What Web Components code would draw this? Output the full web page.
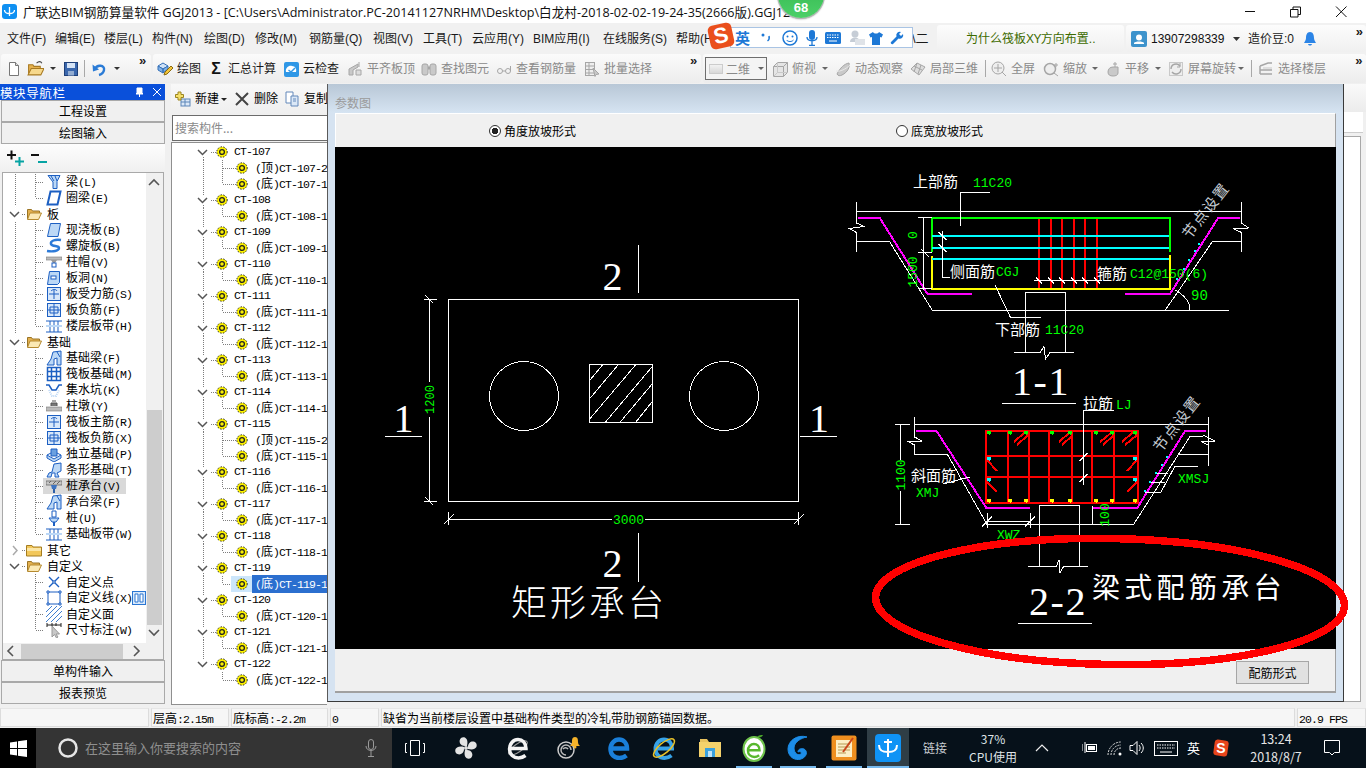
<!DOCTYPE html>
<html lang="zh">
<head>
<meta charset="utf-8">
<title>GGJ2013</title>
<style>
  html, body { margin: 0; height: 100%; overflow: hidden; background: #f0f0f0; }
  body { width: 1366px; height: 768px; position: relative; font: 12px "Liberation Sans", "Noto Sans CJK SC", sans-serif; }
  gl-app { width: 1366px; height: 768px; }
</style>
</head>
<body>
<gl-app>
  <gl-titlebar slot="title"></gl-titlebar>
  <gl-menubar slot="menu"></gl-menubar>
  <gl-toolbar slot="tools"></gl-toolbar>
  <gl-nav slot="nav"></gl-nav>
  <gl-comptree slot="mid"></gl-comptree>
  <gl-dialog slot="dialog"></gl-dialog>
  <gl-strip slot="strip"></gl-strip>
  <gl-status slot="status"></gl-status>
  <gl-taskbar slot="taskbar"></gl-taskbar>
</gl-app>
<gl-badge>68</gl-badge>
<gl-ime></gl-ime>

<script>
const CJK = '"Noto Sans CJK SC", sans-serif'
const ui = `"Liberation Sans", ${CJK}`

// wraps ascii runs so they get the narrow mono look of the tree font
const mono = s => s.replace(/[\x20-\x7e]+/g, m => `<span class="l">${m}</span>`)

const svg = (w, h, body, vb) =>
  `<svg width="${w}" height="${h}" viewBox="${vb || `0 0 ${w} ${h}`}" fill="none">${body}</svg>`

const B = '#1c5fc2', LB = '#bcd8f6', G1 = '#c9c9c9', G2 = '#a6a6a6'

const icons = {
  /* toolbar */
  page: `<path d="M3.5 1.5h6l3 3v10h-9z" fill="#fff" stroke="#777"/><path d="M9.5 1.5v3h3" fill="#ddd" stroke="#777"/>`,
  open: `<path d="M1.5 13V4.5h4l1 1.5h6v2" fill="#e6b24e" stroke="#a87a22"/><path d="M4 8h12l-3 6H1z" fill="#f6d88c" stroke="#a87a22"/><path d="M9 3c2-2 4-2 5 0" stroke="#444"/>`,
  save: `<rect x="1.5" y="1.5" width="13" height="13" fill="#3a67ad" stroke="#1e3f78"/><rect x="4" y="2" width="8" height="5" fill="#d5e3f5"/><rect x="5" y="10" width="6" height="4.5" fill="#93add2"/>`,
  undo: `<path d="M4 8C6 3 14 4 13 9c-.5 3-3 4.5-5 5" stroke="#2a7bd6" stroke-width="2.4"/><path d="M1.5 3.5l.5 7 6-2z" fill="#2a7bd6"/>`,
  draw: `<path d="M1 5l5-3 5 3-5 3z" fill="#cfe2f7" stroke="#3570b8"/><path d="M1 5v4l5 3V8zM11 5v3L6 12V8z" fill="#7fb0e6" stroke="#3570b8"/><path d="M7 14l1-3 6-6 2 2-6 6z" fill="#f3c63c" stroke="#8a6a10"/>`,
  cloud: `<rect x="1" y="1" width="15" height="15" rx="2" fill="#2f97e6"/><path d="M3 11c-1-4 3-7 6-6 3 0 5 3 4 6z" fill="#fff"/><path d="M5.5 9l2.5 2 4-4" stroke="#2f97e6" stroke-width="1.5"/>`,
  align: `<path d="M2 8l9-5v3l-5 3v5H2z" fill="${G1}" stroke="${G2}"/><path d="M9 9h5v5H9z" fill="#ddd" stroke="${G2}"/><path d="M12 1v5" stroke="${G2}"/>`,
  find: `<rect x="1" y="3" width="6" height="11" rx="2" fill="${G1}" stroke="${G2}"/><rect x="9" y="3" width="6" height="11" rx="2" fill="${G1}" stroke="${G2}"/><path d="M7 7h2" stroke="${G2}" stroke-width="3"/>`,
  glass: `<circle cx="4" cy="10" r="2.5" stroke="${G2}"/><circle cx="12" cy="10" r="2.5" stroke="${G2}"/><path d="M6.5 10h3M14.5 10V5" stroke="${G2}"/>`,
  batch: `<rect x="1.5" y="1.5" width="9" height="13" fill="#eee" stroke="${G2}"/><path d="M1.5 5h9M1.5 8.5h9M1.5 12h9M5 1.5v13" stroke="${G2}"/><path d="M9 7l6 6-3 .5-1 2z" fill="${G1}" stroke="${G2}"/>`,
  persp: `<path d="M1.5 5.5h10v10h-10zM1.5 5.5l4-4h10v10l-4 4M11.5 5.5l4-4" fill="#e5e5e5" stroke="${G2}"/><path d="M5.5 1.5v10h10M5.5 11.5l-4 4" stroke="${G1}"/>`,
  orbit: `<path d="M2 13C5 7 9 3 14 2c1 4-1 9-7 12-2 1-4 1-5-1z" fill="${G1}" stroke="${G2}"/><path d="M1 10c4 1 10-2 14-6" stroke="#e8e8e8"/>`,
  local: `<path d="M1 8l6-6 8 4-6 8z" fill="#ddd" stroke="${G2}"/><path d="M4 5l8 4M7 2l-3 9M11 4l-3 9" stroke="${G2}"/>`,
  full: `<circle cx="7" cy="7" r="6" fill="#eee" stroke="${G2}"/><path d="M7 3v8M3 7h8M11 11l4 4" stroke="${G2}"/>`,
  zoom: `<circle cx="7" cy="8" r="5.5" fill="#eee" stroke="${G2}" stroke-width="1.5"/><path d="M11 12l4 3M13 2v4M11 4h4" stroke="${G2}"/>`,
  pan: `<path d="M3 11c0-3 2-5 5-5l5 0v6c0 2-2 3-5 3s-5-1-5-4z" fill="${G1}" stroke="${G2}"/><path d="M10 1v5M8 3h4" stroke="${G2}"/>`,
  rotate: `<rect x="1.5" y="1.5" width="13" height="13" fill="#eee" stroke="${G1}"/><path d="M3 8a5 5 0 0 1 9-3M13 8a5 5 0 0 1-9 3" stroke="${G2}" stroke-width="1.4"/><path d="M12 2v4H9" stroke="${G2}"/>`,
  floors: `<path d="M2 5l8-3h4M2 9h12M2 13h12M2 5v8" stroke="${G2}" stroke-width="1.5"/><path d="M5 7h9" stroke="${G1}"/>`,
  /* nav tree */
  beam: `<path d="M2 1.5h12l-3 6v7H7V8z" fill="${LB}" stroke="${B}"/><path d="M5 2l3 5M9 2l2 5" stroke="${B}"/>`,
  ring: `<path d="M4.5 1.5h10l-3 13h-10z" fill="#fff" stroke="${B}" stroke-width="2"/>`,
  slab: `<path d="M4.5 1.5h10l-2.5 13H1.5z" fill="${LB}" stroke="${B}"/>`,
  spiral: `<path d="M15 2C9 1 4 3 5 6c1 3 8 1 8 4s-6 4-12 3" stroke="#2c7ad8" stroke-width="2.4"/>`,
  cap: `<rect x="0" y="3" width="16" height="3" fill="#bbb" stroke="#777" stroke-width=".6"/><path d="M5 6h6l-2 3H7z" fill="#999"/><rect x="6" y="9" width="4" height="4" fill="#fff" stroke="${B}"/>`,
  hole: `<path d="M3.5 1.5h10v11l-2 2h-10z" fill="${LB}" stroke="${B}"/><rect x="5" y="6" width="5" height="3" fill="#fff" stroke="${B}"/>`,
  grid1: `<rect x="1.5" y="1.5" width="13" height="13" fill="#d8e8fa" stroke="${B}"/><path d="M8 3v10M3 8h10M5 5c2-2 5-2 6 0" stroke="${B}"/>`,
  grid2: `<rect x="1.5" y="1.5" width="13" height="13" fill="#d8e8fa" stroke="${B}"/><path d="M2 8h12M8 2v12M4 5h8v6H4z" stroke="${B}"/>`,
  band: `<path d="M0 3h16M0 14h16M4 3v11M8 3v11M12 3v11" stroke="${B}"/><path d="M0 8h16" stroke="${LB}" stroke-width="2"/>`,
  fbeam: `<path d="M1 15l4-6 2-7 8-1v14h-4V8L8 9v6z" fill="${LB}" stroke="${B}"/><path d="M11 2l3 5" stroke="${B}"/>`,
  mat: `<rect x="1.5" y="1.5" width="13" height="13" fill="#fff" stroke="${B}" stroke-width="1.5"/><path d="M5.5 2v12M10.5 2v12M2 5.5h12M2 10.5h12" stroke="${B}" stroke-width="1.5"/>`,
  pit: `<path d="M0 3h3l3 5h4l3-5h3" stroke="${B}" stroke-width="1.5"/><path d="M3 8l3 6h4l3-6" stroke="${LB}" stroke-width="2" stroke-dasharray="1 1"/>`,
  pier: `<path d="M5 8V5h6v3" fill="#777" stroke="#555"/><path d="M6 2h4v3H6z" fill="#aaa"/><rect x="0" y="9" width="16" height="4" fill="#bbb" stroke="#777" stroke-width=".6"/>`,
  iso: `<path d="M1 9l7 4 7-4v3l-7 4-7-4z" fill="${LB}" stroke="${B}"/><path d="M5 3h6v7H5z" fill="#6aa0e0" stroke="${B}"/><path d="M1 9l4-2M15 9l-4-2" stroke="${B}"/>`,
  strip: `<path d="M1 15l2-4 3-1 2-8 7-1v8l-4 2 2 4h-4V11H6l-1 4z" fill="${LB}" stroke="${B}"/>`,
  capp: `<rect x="0" y="3" width="16" height="4" fill="#c6c6c6" stroke="#666" stroke-width=".8"/><path d="M3 5l2-2M7 6l3-3M11 6l3-3" stroke="#666"/><path d="M5 7h6l-1 4H6z" fill="#3d73c0"/><path d="M7 11h2v4H7z" fill="#2c5fa8"/>`,
  pile: `<path d="M6 1h4v6h-4z" fill="#fff" stroke="${B}"/><path d="M3 8h10l-3 4H6z" fill="${LB}" stroke="${B}"/><path d="M8 12v4" stroke="${B}" stroke-width="2"/>`,
  pt: `<path d="M3 3l10 10M13 3L3 13" stroke="${B}" stroke-width="1.4"/><circle cx="8" cy="8" r="1.2" fill="#fff" stroke="${B}"/>`,
  line: `<rect x="2" y="2" width="12" height="12" stroke="${B}"/><path d="M1 1h2v2H1zM13 1h2v2h-2zM1 13h2v2H1zM13 13h2v2h-2z" fill="#fff" stroke="${B}"/>`,
  face: `<path d="M0 6l6-6M0 11L11 0M0 16L16 0M5 16L16 5M10 16l6-6" stroke="#3f7fd0"/>`,
  dim: `<path d="M1 3h14M1 1v4M15 1v4" stroke="#222"/><path d="M6 1v3M10 1v3" stroke="#222"/><path d="M6 4l0 11 2.5-2.5 2 3.5 1.5-1-2-3h3.5z" fill="#c8c8c8" stroke="#999"/>`,
  fopen: `<path d="M1.5 13V3.5h4l1 1.5h7v2" fill="#e3b04f" stroke="#9a7424"/><path d="M4 7h11.5l-3 6.5h-11z" fill="#fbe9b4" stroke="#b58a30"/>`,
  fclosed: `<path d="M.5 3.5h5.5l1 1.5h8.5v9H.5z" fill="#f2c75a" stroke="#a57d20"/><path d="M1 6h14v3H1z" fill="#fbe6a6"/>`
}
const ico = (n, s) => svg(s || 16, s || 16, icons[n], '0 0 16 16')

const gear = s => svg(s, s, `<circle cx="6" cy="6" r="5.2" fill="#fbf000" stroke="#222" stroke-dasharray="1.4 1.4"/><circle cx="6" cy="6" r="2.4" fill="#fbf000" stroke="#222" stroke-width="1.3"/>`, '0 0 12 12')

class Shadow extends HTMLElement {
  constructor() {
    super()
    this.attachShadow({ mode: 'open' }).innerHTML = this.markup()
  }
}

class App extends Shadow {
  markup() { return `
    <style>
      :host { display: flex; flex-direction: column; color: #000; }
      .work { display: grid; grid-template-columns: 165px 162px 1017px 22px; height: 624px; margin-top: 1px; overflow: hidden; }
    </style>
    <slot name="title"></slot>
    <slot name="menu"></slot>
    <slot name="tools"></slot>
    <div class="work">
      <slot name="nav"></slot>
      <slot name="mid"></slot>
      <slot name="dialog"></slot>
      <slot name="strip"></slot>
    </div>
    <slot name="status"></slot>
    <slot name="taskbar"></slot>` }
}

class TitleBar extends Shadow {
  markup() { return `
    <style>
      :host { display: flex; align-items: center; height: 23px; background: #fff; padding-left: 2px; font: 12.6px "Open Sans", ${CJK}; color: #111; overflow: hidden; }
      .logo { width: 15px; height: 15px; background: #0f90f2; border-radius: 3px; display: flex; align-items: center; justify-content: center; margin-right: 6px; flex: none; }
      .txt { width: 778px; white-space: nowrap; overflow: hidden; flex: none; }
      .ctl { margin-left: auto; display: flex; align-items: center; }
      .ctl svg { display: block; }
    </style>
    <span class="logo">${svg(13, 13, '<path d="M6.5 2v9M1.5 5c0 3 2 3.5 5 3.5s5-.5 5-3.5" stroke="#fff" stroke-width="1.3"/>')}</span>
    <span class="txt">广联达BIM钢筋算量软件 GGJ2013 - [C:\\Users\\Administrator.PC-20141127NRHM\\Desktop\\白龙村-2018-02-02-19-24-35(2666版).GGJ12</span>
    <span class="ctl">
      ${svg(46, 22, '<path d="M17 10.5h10" stroke="#111"/>')}
      ${svg(46, 22, '<path d="M16.5 8.5h7.5v7.5h-7.5zM19 8.5V6h7.5v7.5H24" stroke="#111"/>')}
      ${svg(46, 22, '<path d="M16 5.5l10.5 10.5M26.5 5.5L16 16" stroke="#111"/>')}
    </span>` }
}

class MenuBar extends Shadow {
  markup() {
    const items = [['文件(F)', 48], ['编辑(E)', 49], ['楼层(L)', 48], ['构件(N)', 52], ['绘图(D)', 51], ['修改(M)', 54], ['钢筋量(Q)', 64], ['视图(V)', 50], ['工具(T)', 49], ['云应用(Y)', 61], ['BIM应用(I)', 70], ['在线服务(S)', 73], ['帮助(H)', 40]]
    return `
    <style>
      :host { display: flex; align-items: center; height: 31px; background: #f1f1f1; font: 12px/16px ${ui}; color: #1a1a1a; }
      .left { display: flex; padding-left: 7px; width: 709px; box-sizing: border-box; white-space: nowrap; flex: none; }
      .left span { flex: none; }
      .rest { width: 25px; margin-left: 203px; flex: none; font-size: 13px; white-space: nowrap; }
      .tab { display: flex; align-items: center; height: 27px; background: linear-gradient(#fcfcfc, #f0f0f0); border-radius: 3px; flex: none; }
      .q { width: 187px; padding-left: 29px; box-sizing: border-box; color: #3d6b00; white-space: nowrap; }
      .q .xy { font-family: "Liberation Sans Narrow", "Liberation Sans"; letter-spacing: -.6px; }
      .me { margin-left: 2px; width: 240px; padding-left: 5px; box-sizing: border-box; }
      .num { margin-left: 4px; width: 75px; color: #111; }
      .car { margin: 0 8px 0 7px; }
      .bell { margin-left: 9px; }
      .mm { margin: 0 4px 0 auto; font: bold 13px/12px "Liberation Sans"; letter-spacing: -1px; align-self: flex-start; padding-top: 1px; }
      svg { display: block; }
    </style>
    <div class="left">${items.map(i => `<span style="width:${i[1]}px">${i[0]}</span>`).join('')}</div>
    <span class="rest">\\二</span>
    <div class="tab q">为什么筏板<span class="xy">XY</span>方向布置..</div>
    <div class="tab me">
      ${svg(16, 16, '<rect width="16" height="16" rx="2" fill="#3d93cc"/><circle cx="8" cy="6.5" r="3" fill="#fff"/><path d="M3 13h10v-1c-1-2-9-2-10 0z" fill="#fff"/>')}
      <span class="num">13907298339</span>
      <span class="car">${svg(7, 4, '<path d="M0 0h7L3.5 4z" fill="#333"/>')}</span>
      <span>造价豆:0</span>
      <span class="bell">${svg(14, 16, '<path d="M7 1c-3 0-4 3-4 6 0 2-1 3-2 5h12c-1-2-2-3-2-5 0-3-1-6-4-6z" fill="#2b84e6"/><path d="M5 13c.5 2 3.5 2 4 0z" fill="#2b84e6"/>')}</span>
      <span class="mm">»</span>
    </div>` }
}

class Tool extends Shadow {
  markup() {
    const off = this.hasAttribute('off')
    const cg = this.getAttribute('caret')
    return `
    <style>
      :host { display: inline-flex; align-items: center; flex: none; height: 24px; font: 12px/16px ${ui}; color: ${off ? '#8a8a8a' : '#1a1a1a'}; }
      svg { display: block; flex: none; }
      .t { margin-left: 4px; white-space: nowrap; }
      .sym { width: 16px; text-align: center; font: bold 16px "Liberation Sans"; color: #111; }
    </style>
    ${this.getAttribute('icon') === 'sigma' ? '<span class="sym">Σ</span>' : ico(this.getAttribute('icon'))}
    <span class="t"><slot></slot></span>
    ${cg !== null ? `<span style="margin-left:${cg}px">${svg(6, 3, `<path d="M0 0h6L3 3z" fill="${off ? '#666' : '#333'}"/>`)}</span>` : ''}` }
}

class ToolBar extends Shadow {
  markup() {
    const more = w => `<span style="font:bold 13px/12px 'Liberation Sans';letter-spacing:-1px;align-self:flex-start;margin:1px 0 0 ${w}px;color:#222;flex:none">»</span>`
    const sep = m => `<i style="width:1px;height:17px;background:#a8a8a8;margin-left:${m}px;flex:none"></i>`
    const caret = m => `<span style="margin-left:${m}px">${svg(6, 3, '<path d="M0 0h6L3 3z" fill="#333"/>')}</span>`
    return `
    <style>
      :host { display: flex; height: 29px; padding-left: 1px; gap: 2px; background: #f0f0f0; }
      .seg { display: flex; align-items: center; height: 29px; background: linear-gradient(#fbfbfb, #ececec); border-radius: 3px; flex: none; box-sizing: border-box; }
      .combo { display: flex; align-items: center; flex: none; width: 62px; height: 23px; margin-left: 1px; border: 1px solid #6e6e6e; box-sizing: border-box; font: 12px ${ui}; color: #8a8a8a; padding-left: 3px; background: #f4f4f4; white-space: nowrap; }
      .combo b { width: 14px; height: 10px; background: linear-gradient(#f2f2f2, #d8d8d8); border: 1px solid #ccc; margin-right: 3px; box-sizing: border-box; }
      .combo i { margin-left: 8px; }
      svg { display: block; }
    </style>
    <div class="seg" style="width:150px;padding-left:5px">
      ${ico('page')}
      <span style="margin-left:5px">${ico('open', 17)}</span>${caret(6)}
      <span style="margin-left:7px">${ico('save')}</span>
      ${sep(5)}
      <span style="margin-left:6px">${ico('undo')}</span>${caret(7)}
      ${more(19)}
    </div>
    <div class="seg" style="width:548px;padding-left:4px">
      <gl-tool icon="draw">绘图</gl-tool>
      <gl-tool icon="sigma" style="margin-left:7px">汇总计算</gl-tool>
      <gl-tool icon="cloud" style="margin-left:7px">云检查</gl-tool>
      <gl-tool icon="align" off style="margin-left:8px">平齐板顶</gl-tool>
      <gl-tool icon="find" off style="margin-left:6px">查找图元</gl-tool>
      <gl-tool icon="glass" off style="margin-left:7px">查看钢筋量</gl-tool>
      <gl-tool icon="batch" off style="margin-left:8px">批量选择</gl-tool>
      ${more(38)}
    </div>
    <div class="seg" style="width:663px;padding-left:1px">
      <div class="combo"><b></b>二维<i>${svg(6, 3, '<path d="M0 0h6L3 3z" fill="#666"/>')}</i></div>
      <gl-tool icon="persp" off caret="6" style="margin-left:5px">俯视</gl-tool>
      <gl-tool icon="orbit" off style="margin-left:7px">动态观察</gl-tool>
      <gl-tool icon="local" off style="margin-left:7px">局部三维</gl-tool>
      ${sep(7)}
      <gl-tool icon="full" off style="margin-left:5px">全屏</gl-tool>
      <gl-tool icon="zoom" off caret="5" style="margin-left:8px">缩放</gl-tool>
      <gl-tool icon="pan" off caret="6" style="margin-left:7px">平移</gl-tool>
      <gl-tool icon="rotate" off caret="2" style="margin-left:7px">屏幕旋转</gl-tool>
      ${sep(7)}
      <gl-tool icon="floors" off style="margin-left:6px">选择楼层</gl-tool>
      ${more(29)}
    </div>` }
}

const treeFont = `
  .row { display: flex; align-items: center; height: 16px; white-space: nowrap; font: 12px/16px ${CJK}; color: #000; }
  .l { font: 11.5px/16px "Liberation Mono", monospace; letter-spacing: -.9px; }
  svg { display: block; flex: none; }
  .dot { stroke: #7d7d7d; stroke-dasharray: 1 1; shape-rendering: crispEdges; }
`

class Nav extends Shadow {
  markup() {
    const R = [
      ['beam', '梁(L)', 1], ['ring', '圈梁(E)', 1, 1],
      [0, '板', 'o'],
      ['slab', '现浇板(B)', 1], ['spiral', '螺旋板(B)', 1], ['cap', '柱帽(V)', 1], ['hole', '板洞(N)', 1], ['grid1', '板受力筋(S)', 1], ['grid2', '板负筋(F)', 1], ['band', '楼层板带(H)', 1, 1],
      [0, '基础', 'o'],
      ['fbeam', '基础梁(F)', 1], ['mat', '筏板基础(M)', 1], ['pit', '集水坑(K)', 1], ['pier', '柱墩(Y)', 1], ['grid1', '筏板主筋(R)', 1], ['grid2', '筏板负筋(X)', 1], ['iso', '独立基础(P)', 1], ['strip', '条形基础(T)', 1], ['capp', '桩承台(V)', 1, 0, 'hl'], ['fbeam', '承台梁(F)', 1], ['pile', '桩(U)', 1], ['band', '基础板带(W)', 1, 1],
      [0, '其它', 'c'],
      [0, '自定义', 'o'],
      ['pt', '自定义点', 0], ['line', '自定义线(X)', 0, 0, 'pop'], ['face', '自定义面', 0], ['dim', '尺寸标注(W)', 0, 1]
    ]
    const rows = R.map(r => {
      if (!r[0]) {
        const ch = r[2] === 'o'
          ? '<path d="M10 6l4.5 4.5L19 6" stroke="#555" stroke-width="1.5"/>'
          : '<path d="M13 4l4 4.5-4 4.5" stroke="#aaa" stroke-width="1.5"/>'
        return `<div class="row">${svg(23, 16, `${ch}<path class="dot" d="M22 8.5h4"/>`, '3 0 23 16')}
          ${ico(r[2] === 'o' ? 'fopen' : 'fclosed')}<span style="margin-left:5px">${r[1]}</span></div>`
      }
      const g = `${r[2] ? '<path class="dot" d="M15.5 0v16"/>' : ''}<path class="dot" d="M35.5 0v${r[3] ? 8 : 16}M35.5 8.5h8"/>`
      const pop = r[4] === 'pop' ? svg(14, 16, '<rect x=".5" y="1.5" width="13" height="13" fill="#d8e8fa" stroke="#2a76d2"/><path d="M3 4h3v8H3zM8 4h3v8H8z" fill="#fff" stroke="#2a76d2"/>') : ''
      return `<div class="row">${svg(40, 16, g, '3 0 40 16')}
        <span class="cell ${r[4] || ''}">${ico(r[0])}<span>${mono(r[1])}</span></span>${pop}</div>`
    }).join('')
    const arrow = d => svg(16, 16, `<path d="${d}" stroke="#555" stroke-width="1.6"/>`)
    return `
    <style>
      :host { display: flex; flex-direction: column; width: 165px; height: 621px; box-sizing: border-box; }
      ${treeFont}
      .head { display: flex; align-items: center; height: 16px; background: #0a50da; color: #fff; font: 12.5px/15px ${CJK}; letter-spacing: .6px; flex: none; }
      .head span { flex: 1; }
      .head svg { margin-right: 5px; }
      .head svg + svg { margin-right: 1px; }
      .btn { height: 22px; margin-left: 1px; text-align: center; background: #f0f0f0; border: 1px solid #a9a9a9; font: 12px/20px ${CJK}; box-sizing: border-box; flex: none; width: 164px; }
      .plus { display: flex; align-items: center; gap: 6px; height: 28px; padding-left: 6px; background: linear-gradient(#fdfdfd, #f0f0f0); flex: none; }
      .frame { display: grid; grid-template-columns: 143px 16px; grid-template-rows: 470px 16px; margin-left: 2px; width: 162px; height: 488px; flex: none; box-sizing: border-box; border: 1px solid #a9a9a9; background: #f0f0f0; }
      .tree { background: #fff; overflow: hidden; padding-top: 1px; box-sizing: border-box; }
      .cell { display: flex; align-items: center; gap: 4px; padding: 0 6px 0 3px; height: 16px; flex: none; }
      .cell.hl { background: #d9d9d9; }
      .cell.pop { padding-right: 0; }
      .vs { display: flex; flex-direction: column; align-items: center; }
      .vs b { width: 15px; height: 215px; background: #cdcdcd; flex: none; margin-top: 220px; }
      .vs .up { margin-top: 1px; height: 16px; flex: none; }
      .hs { display: flex; align-items: center; grid-column: 1 / 3; }
      .hs b { width: 102px; height: 15px; background: #cdcdcd; margin: 0 5px 0 2px; }
    </style>
    <div class="head"><span>模块导航栏</span>
      ${svg(12, 12, '<path d="M4 2h5v5l1 1H3l1-1zM6.5 8v3" stroke="#fff" fill="#fff"/>')}
      ${svg(14, 12, '<path d="M3 2l8 8M11 2l-8 8" stroke="#fff"/>')}
    </div>
    <div class="btn">工程设置</div>
    <div class="btn">绘图输入</div>
    <div class="plus">
      ${svg(18, 18, '<path d="M1 6h9M5.5 1.5v9" stroke="#111" stroke-width="2"/><path d="M9 12.5h9M13.5 8v9" stroke="#06a3a3" stroke-width="2"/>')}
      ${svg(18, 18, '<path d="M1 6h8" stroke="#111" stroke-width="2"/><path d="M8 13h9" stroke="#06a3a3" stroke-width="2"/>')}
    </div>
    <div class="frame">
      <div class="tree">${rows}</div>
      <div class="vs">
        <span class="up">${arrow('M3 11l5-5 5 5')}</span>
        <b></b>
        ${arrow('M3 5l5 5 5-5')}
      </div>
      <div class="hs">${arrow('M10 3L5 8l5 5')}<b></b>${arrow('M6 3l5 5-5 5')}</div>
    </div>
    <div class="btn">单构件输入</div>
    <div class="btn">报表预览</div>` }
}

class CompTree extends Shadow {
  markup() {
    const groups = [[107, ['顶', 2], ['底', 1]]]
    for (let n = 108; n <= 122; n++) groups.push(n === 115 ? [n, ['顶', 2], ['底', 1]] : [n, ['底', 1]])
    const rows = groups.map((g, gi) => {
      const more = gi < groups.length - 1
      const [num, ...kids] = g
      const top = `<div class="row">${svg(44, 16, `<path d="M198 6l4.5 4.5L207 6" stroke="#555" stroke-width="1.5"/><path class="dot" d="M211 8.5h5"/>${gi ? '<path class="dot" d="M203.5 0v3"/>' : ''}${more ? '<path class="dot" d="M203.5 13v3"/>' : ''}`, '172 0 44 16')}
        ${gear(12)}<span class="l" style="margin-left:6px">CT-${num}</span></div>`
      return top + kids.map((k, i) => {
        const last = i === kids.length - 1
        const sel = num === 119
        return `<div class="row">${svg(59, 16, `${more ? '<path class="dot" d="M203.5 0v16"/>' : ''}<path class="dot" d="M222.5 0v${last ? 8 : 16}M222.5 8.5h9"/>`, '172 0 59 16')}
          <span class="ic ${sel ? 'sel' : ''}">${sel ? '' : svg(5, 16, '<path class="dot" d="M0 8.5h5"/>')}<span style="margin-left:${sel ? 5 : 0}px">${gear(12)}</span></span>
          <span class="tx ${sel ? 'sel' : ''}">${mono(`(${k[0]})CT-${num}-${k[1]}`)}</span></div>`
      }).join('')
    }).join('')
    return `
    <style>
      :host { display: flex; flex-direction: column; width: 162px; height: 621px; overflow: hidden; box-sizing: border-box; padding-left: 6px; }
      ${treeFont}
      .bar { display: flex; align-items: center; height: 30px; flex: none; background: linear-gradient(#f8f8f8, #efefef); font: 12px/16px ${ui}; white-space: nowrap; padding-left: 4px; }
      .bar svg { margin-right: 4px; }
      .search { height: 26px; flex: none; margin: 1px -2px 0 1px; box-sizing: border-box; border: 1px solid #6b6b6b; background: #fff; color: #8a8a8a; font: 12px/24px ${CJK}; padding-left: 2px; }
      .tree { flex: 1; background: #fff; border: 1px solid #8f8f8f; border-right: 0; margin-top: 1px; padding-top: 1px; overflow: hidden; box-sizing: border-box; }
      .ic { display: flex; align-items: center; width: 21px; height: 16px; flex: none; }
      .ic.sel { background: #cce6fb; }
      .tx { display: block; padding-left: 3px; flex: 1; min-width: 80px; }
      .tx.sel { background: #2b6fcf; color: #fff; }
    </style>
    <div class="bar">
      ${svg(16, 16, '<rect x="6" y="8" width="9" height="7" fill="#dbe8f7" stroke="#5d86b8"/><path d="M6 11h9M10 8v7" stroke="#5d86b8"/><path d="M3 1h3v2.5h2.5v3H6V9H3V6.5H.5v-3H3z" fill="#f5e06a" stroke="#9b8420"/>')}
      <span>新建</span><span style="margin:0 8px 0 2px">${svg(6, 3, '<path d="M0 0h6L3 3z" fill="#222"/>').replace('<svg', '<svg style="margin:0"')}</span>
      ${svg(14, 14, '<path d="M1 1l12 12M13 1L1 13" stroke="#444" stroke-width="2"/>')}
      <span style="margin:0 6px 0 1px">删除</span>
      ${svg(16, 16, '<path d="M2 1h7v11H2z" fill="#fff" stroke="#6288ba"/><path d="M7 5h7v10H7z" fill="#dbe8f7" stroke="#6288ba"/><path d="M9 8h3M9 10h3" stroke="#6288ba"/>')}
      <span>复制</span>
    </div>
    <div class="search">搜索构件...</div>
    <div class="tree">${rows}</div>` }
}

class Drawing extends Shadow {
  markup() {
    const w = (x1, y1, x2, y2) => `M${x1} ${y1}L${x2} ${y2}`
    const slash = (x, y, s = 5) => `M${x - s} ${y + s}L${x + s} ${y - s}`
    const bslash = (x, y, s = 4) => `M${x - s} ${y - s}L${x + s} ${y + s}`
    const xs = [987, 1008, 1024, 1050, 1068, 1094, 1110, 1133]
    const dots = (arr, y, c) => arr.map(x => `<rect x="${x}" y="${y - 2}" width="4" height="4" rx="1.5" fill="${c}"/>`).join('')
    return `
    <style>
      :host { display: block; width: 1001px; height: 502px; background: #000; overflow: hidden; }
      svg { display: block; }
      path, rect, circle { shape-rendering: crispEdges; }
      .n { stroke: #fff; fill: none; }
      text { font-family: ${CJK}; }
      .w { fill: #fff; font-size: 15px; }
      .g { fill: #0f0; font: 13px "Liberation Mono", monospace; }
      .s { fill: #fff; font: 40px "Liberation Serif", serif; text-anchor: middle; }
      .t { fill: #fff; font-size: 36px; font-weight: 300; letter-spacing: 3px; }
      .b { fill: #fff; font-size: 28px; font-weight: 400; letter-spacing: 4.3px; }
      .r { fill: #c5ccd3; font-size: 15px; letter-spacing: 1.5px; text-anchor: middle; }
    </style>
    <svg width="1001" height="502" viewBox="335 147 1001 502">
      <!-- plan -->
      <path class="n" d="M448.5 299.5h350v202h-350z"/>
      <circle class="n" cx="524" cy="396" r="34.5"/>
      <circle class="n" cx="724" cy="396" r="34.5"/>
      <path class="n" d="M589.5 364.5h63v58h-63z"/>
      <path class="n" d="M590 380L602.7 364.7M590 398.3L618.3 364.7M590 418.7L635.7 364.7M605.3 422.3L652.7 366M620 422.3L652.7 383.3M635.7 422.3L652.7 401"/>
      <path class="n" d="M429.5 299.5V382M429.5 417V501.5M424 299.5h13M424 501.5h13${bslash(429.5, 299.5)}${bslash(429.5, 501.5)}"/>
      <text class="g" style="font-size:12px" text-anchor="middle" transform="translate(434,399.5) rotate(-90)">1200</text>
      <path class="n" d="M448.5 519.5H612M645 519.5H798.5M448.5 512V525M798.5 512V525${slash(448.5, 519.5)}${slash(798.5, 519.5)}"/>
      <text class="g" x="628.5" y="523.5" text-anchor="middle">3000</text>
      <path class="n" d="M638.5 245V293M638.5 533V582M385 436.5h37M800 436.5h37"/>
      <text class="s" x="612.5" y="290">2</text>
      <text class="s" x="612.5" y="577">2</text>
      <text class="s" x="403.5" y="432">1</text>
      <text class="s" x="819" y="432">1</text>
      <text class="t" x="511" y="616">矩形承台</text>

      <!-- section 1-1 -->
      <path class="n" d="M856.5 211.5H1241.5M856.5 202V223L864 226.5L849 228.5L856.5 232.5V252M1241.5 202V223L1248.5 228L1233 228.5L1241.5 232.5V252"/>
      <path class="n" d="M856.5 241.5H889.5L932.5 310.5H1229M1165 310.5L1212.5 241.5H1241.5"/>
      <path d="M858 217.5H879.5L927.5 294H971.5M1125 294H1170L1218.5 217.5H1239.5" stroke="#f0f" stroke-width="2" fill="none"/>
      <path d="M1039 218V288M1051 218V288M1062 218V288M1074 218V288M1085 218V288M1097 218V288" stroke="#f00" stroke-width="2"/>
      <path d="M932 252V217.5H1169.5V252" stroke="#0f0" stroke-width="2" fill="none"/>
      <path d="M932 256V288.5H1169.5V255" stroke="#ff0" stroke-width="2" fill="none"/>
      <path d="M932 236H1169M932 248H1169M932 258.5H1169" stroke="#0ff" stroke-width="2"/>
      <path class="n" d="M960.5 226V192.5H990M923.5 217.5V290M918 217.5H932M918 252.5H932M918 288.5H932M942.5 231V277H950${bslash(942.5, 236)}${bslash(942.5, 248)}${bslash(925, 253)}"/>
      <path class="n" d="M1034 280.5H1102${bslash(1039, 280.5, 3)}${bslash(1051, 280.5, 3)}${bslash(1062, 280.5, 3)}${bslash(1074, 280.5, 3)}${bslash(1085, 280.5, 3)}${bslash(1097, 280.5, 3)}"/>
      <path class="n" d="M995 285L1010.5 317.5H1041M1025.5 352.5V292.5H1065.5V352.5M1014 352.5H1040L1044 346.5L1045.5 359L1050 352.5H1073.5M1175 290C1184 295 1190 302 1190 310"/>
      <text class="w" x="913" y="186.5">上部筋</text>
      <text class="g" x="973" y="187">11C20</text>
      <text class="w" x="950" y="276.5">侧面筋</text>
      <text class="g" x="996" y="276">CGJ</text>
      <text class="w" x="1097" y="279">箍筋</text>
      <text class="g" x="1130" y="278">C12@150(6)</text>
      <text class="w" x="995" y="334.5">下部筋</text>
      <text class="g" x="1045" y="334">11C20</text>
      <text class="g" x="1191" y="299.5" style="font-size:14px">90</text>
      <text class="g" text-anchor="middle" transform="translate(916.5,235) rotate(-90)">0</text>
      <text class="g" text-anchor="middle" transform="translate(916.5,272) rotate(-90)">1500</text>
      <text class="r" transform="translate(1210,214) rotate(-52)">节点设置</text>
      <path d="M1176 278h2v2h-2zM1182.5 268h2v2h-2zM1188 259h2v2h-2zM1193.5 250h2v2h-2zM1198 243h2v2h-2z" fill="#0ff"/>
      <text class="s" x="1041" y="395" style="letter-spacing:1.5px">1-1</text>
      <path class="n" d="M1002 403.5H1076"/>

      <!-- section 2-2 -->
      <path class="n" d="M914.5 424.5H1208.5M914.5 417V437L922 441L908 441.5L914.5 445V454.5H947.5L986.5 523.5L986.5 524.5H1133.5L1190 436.5H1203M1208.5 417V466M1203 435L1215 441L1201 441.5L1208.5 445M1179 454.5H1208.5"/>
      <path d="M916 431H936.5L986 507.5H1030M1091.5 507.5H1137.5L1185 431H1206" stroke="#f0f" stroke-width="2" fill="none"/>
      <path d="M986 431H1137.5V502.5H986zM1007.5 431V502M1028.5 431V502M1048.5 431V502M1072 431V502M1091.5 431V502M1113.5 431V502M986 456H1137M986 476.5H1137" stroke="#f00" stroke-width="2" fill="none"/>
      <path d="${w(1014, 442, 1025, 432)}${w(1017, 445, 1028, 435)}${w(1059, 442, 1069, 433)}${w(1062, 445, 1072, 436)}${w(1100, 442, 1111, 433)}${w(1103, 445, 1113, 436)}${w(1122, 442, 1133, 432)}${w(1125, 445, 1137, 435)}${w(987, 460, 997, 471)}${w(987, 482, 997, 492)}${w(1137, 460, 1127, 471)}${w(1137, 482, 1127, 492)}" stroke="#f00" stroke-width="2"/>
      ${dots(xs, 432.5, '#0f0')}
      ${dots(xs, 500.5, '#ff0')}
      ${dots([987, 1133], 458.5, '#0ff')}
      ${dots([987, 1133], 479.5, '#0ff')}
      <path class="n" d="M900.5 424.5V460M900.5 491V524.5M895 424.5H910M895 524.5H910"/>
      <path class="n" d="M1083.5 410V485M1083.5 410H1114${slash(1083.5, 457, 4)}${slash(1083.5, 478, 4)}"/>
      <path class="n" d="M943 484L970 477M986.5 521.5H1030M987 513V528M1030 513V528${slash(987, 521.5)}${slash(1030, 521.5)}"/>
      <path class="n" d="M1175 466H1198M1175 466L1161 492H1145M1168 473.5H1155M1165 482.5H1151"/>
      <path class="n" d="M1039.5 566V505.5H1079.5V566M1028 566H1056.5L1059 560L1060 572.5L1064 566H1087.5M1092.5 505.5V524.5"/>
      <path d="M1166 456h2v2h-2zM1161 464h2v2h-2zM1155 472h2v2h-2zM1149 481h2v2h-2zM1144 490h2v2h-2z" fill="#0ff"/>
      <text class="g" text-anchor="middle" transform="translate(904.5,475) rotate(-90)">1100</text>
      <text class="w" x="911" y="480.5">斜面筋</text>
      <text class="g" x="916" y="497">XMJ</text>
      <text class="g" x="1178" y="483">XMSJ</text>
      <text class="g" x="997" y="539">XWZ</text>
      <text class="g" text-anchor="middle" transform="translate(1109,515) rotate(-90)">100</text>
      <text class="w" x="1083" y="408.5">拉筋</text>
      <text class="g" x="1116" y="408.5">LJ</text>
      <text class="r" transform="translate(1181,427) rotate(-52)">节点设置</text>
      <text class="s" x="1058" y="615" style="letter-spacing:1.5px">2-2</text>
      <path class="n" d="M1018 623.5H1092"/>
      <text class="b" x="1092" y="598">梁式配筋承台</text>
    </svg>` }
}

class Dialog extends Shadow {
  markup() { return `
    <style>
      :host { display: block; position: relative; width: 1017px; height: 618px; box-sizing: border-box; border-left: 1px solid #5a5a5a; border-right: 1px solid #3a3a3a; border-bottom: 1px solid #3a3a3a; background: #d6e3f1; font: 12px ${CJK}; }
      .cap { height: 29px; background: linear-gradient(#b8c7d6, #d6e4f2); color: #9a9a9a; padding: 11px 0 0 7px; box-sizing: border-box; line-height: 16px; }
      .body { margin: 0 7px; background: #f0f0f0; }
      .opts { display: grid; grid-template-columns: 407px 1fr; height: 34px; align-items: center; padding-left: 153px; box-sizing: border-box; border-top: 1px solid #fff; border-right: 1px solid #a0a0a0; border-left: 1px solid #fff; }
      .opt { display: flex; align-items: center; gap: 3px; line-height: 16px; }
      .rad { width: 12px; height: 12px; border: 1px solid #333; border-radius: 50%; background: #fff; box-sizing: border-box; flex: none; }
      .rad.on { background: radial-gradient(circle, #222 0 3px, #fff 3.5px); }
      .foot { display: flex; justify-content: flex-end; align-items: flex-start; height: 44px; padding: 12px 26px 0 0; box-sizing: border-box; border-bottom: 2px solid #a0a0a0; border-right: 1px solid #a0a0a0; }
      .btn { width: 73px; height: 23px; line-height: 21px; text-align: center; background: #e1e1e1; border: 1px solid #a6a6a6; box-sizing: border-box; }
      .ring { position: absolute; left: 0; top: 0; pointer-events: none; overflow: visible; }
    </style>
    <div class="cap">参数图</div>
    <div class="body">
      <div class="opts">
        <label class="opt"><span class="rad on"></span>角度放坡形式</label>
        <label class="opt"><span class="rad"></span>底宽放坡形式</label>
      </div>
      <gl-drawing></gl-drawing>
      <div class="foot"><div class="btn">配筋形式</div></div>
    </div>
    <svg class="ring" width="1016" height="617" viewBox="328 84 1016 617">
      <ellipse cx="1110" cy="601.5" rx="234.5" ry="63" transform="rotate(1 1110 601.5)" fill="none" stroke="#f00" stroke-width="7.5" shape-rendering="crispEdges"/>
    </svg>` }
}

class Strip extends Shadow {
  markup() { return `
    <style>
      :host { display: flex; flex-direction: column; width: 22px; height: 618px; background: #f0f0f0; }
      .top { height: 28px; background: linear-gradient(#fafafa, #ececec); flex: none; }
      .a { height: 20px; background: #fff; border-bottom: 1px solid #ccc; margin-right: 3px; flex: none; }
      .b { flex: 1; margin: 3px 5px 0 0; background: #fff; border: 1px solid #a8a8a8; border-left: 0; }
    </style>
    <div class="top"></div>
    <div class="a"></div>
    <div class="b"></div>` }
}

class Status extends Shadow {
  markup() { return `
    <style>
      :host { display: flex; gap: 2px; height: 20px; flex: none; background: #f0f0f0; font: 12px/19px ${CJK}; }
      div { background: #f6f6f6; border: 1px solid #dcdcdc; border-top-color: #e6e6e6; box-sizing: border-box; height: 19px; white-space: nowrap; overflow: hidden; padding-left: 1px; flex: none; line-height: 17px; }
      .l { font: 11.5px/17px "Liberation Mono", monospace; letter-spacing: -.9px; }
    </style>
    <div style="width:149px"></div>
    <div style="width:78px">${mono('层高:2.15m')}</div>
    <div style="width:97px">${mono('底标高:-2.2m')}</div>
    <div style="width:49px">${mono('0')}</div>
    <div style="width:914px">缺省为当前楼层设置中基础构件类型的冷轧带肋钢筋锚固数据。</div>
    <div style="flex:1">${mono('20.9 FPS')}</div>` }
}

class TaskIcon extends Shadow {
  markup() {
    const on = this.getAttribute('run')
    const w = this.getAttribute('w') || 45
    return `
    <style>
      :host { display: flex; align-items: center; justify-content: center; width: ${w}px; height: 40px; flex: none; box-sizing: border-box; ${on === 'active' ? 'background: #2f3e46; box-shadow: inset 0 -2px 0 #76b9ed;' : ''} ${on === '1' ? 'background: linear-gradient(#76b9ed, #76b9ed) bottom center / 36px 2px no-repeat;' : ''} }
      ::slotted(svg) { display: block; }
    </style>
    <slot></slot>` }
}

const eLogo = (c, sw) => `<path d="M4 12.5h16c0-5.5-3.5-9-8-9s-8.5 4-8.5 9.5 4 9 9 9c3 0 5-1 7-2.5" stroke="${c}" stroke-width="${sw}"/>`

class Taskbar extends Shadow {
  markup() { return `
    <style>
      :host { display: flex; align-items: center; height: 40px; background: #06111a; color: #dfe4e8; font: 12px/16px ${CJK}; flex: none; overflow: hidden; }
      svg { display: block; flex: none; }
      .start { width: 36px; height: 40px; background: #000; display: flex; align-items: center; justify-content: center; flex: none; }
      .search { display: flex; align-items: center; width: 356px; height: 40px; background: #343434; color: #8f8f8f; font-size: 13px; flex: none; box-sizing: border-box; padding-left: 21px; }
      .search span { margin-left: 6px; width: 280px; white-space: nowrap; }
      text { font-family: "Liberation Sans", sans-serif; }
      .tray { display: flex; align-items: center; flex: none; height: 40px; }
      .col { display: flex; flex-direction: column; align-items: center; line-height: 18px; flex: none; }
    </style>
    <div class="start">${svg(17, 17, '<path d="M0 2.5l7-1V8H0zM8 1.3L17 0v8H8zM0 9h7v6.5l-7-1zM8 9h9v8l-9-1.3z" fill="#fff"/>')}</div>
    <div class="search">
      ${svg(22, 22, '<circle cx="11" cy="11" r="8.5" stroke="#e6e6e6" stroke-width="2.5"/>')}
      <span>在这里输入你要搜索的内容</span>
      ${svg(12, 20, '<rect x="3.5" y="1.5" width="5" height="10" rx="2.5" stroke="#9a9a9a"/><path d="M1 8c0 6 10 6 10 0M6 13v5M3 18.5h6" stroke="#9a9a9a"/>')}
    </div>
    <gl-taskicon w="45">${svg(20, 16, '<path d="M5.5 .5h9v15h-9zM2 3.5H.5v9H2M18 3.5h1.5v9H18" stroke="#fff"/>')}</gl-taskicon>
    <gl-taskicon w="58">${svg(24, 24, '<circle cx="12" cy="12" r="2" fill="#ddd"/><path d="M11 10C6 10 4 5 7 2c3-2 8 0 6 8zM14 11c0-5 5-7 8-4 2 3 0 8-8 6zM13 14c5 0 7 5 4 8-3 2-8 0-6-8zM10 13c0 5-5 7-8 4-2-3 0-8 8-6z" fill="#e4e4e4"/>')}</gl-taskicon>
    <gl-taskicon w="46">${svg(24, 24, `<ellipse cx="12" cy="12" rx="11" ry="4" stroke="#999" transform="rotate(-35 12 12)"/>${eLogo('#f4f4f4', 3.5)}`)}</gl-taskicon>
    <gl-taskicon w="56">${svg(26, 24, '<circle cx="10" cy="14" r="8" stroke="#ccc" stroke-width="1.5"/><path d="M15 14a5 5 0 1 0-5 5M7 13a3 3 0 0 1 5 0" stroke="#bbb" stroke-width="1.5"/><path d="M19 1c-3 0-3 3-3 5s-1 3-2 4h10c-1-1-2-2-2-4s0-5-3-5z" fill="#f5b32a"/><circle cx="19" cy="11" r="1.5" fill="#f5b32a"/>')}</gl-taskicon>
    <gl-taskicon w="44">${svg(24, 24, eLogo('#1a7fd9', 4.5))}</gl-taskicon>
    <gl-taskicon w="46">${svg(26, 26, `<g transform="translate(1 1)">${eLogo('#37a3e8', 4)}</g><ellipse cx="13" cy="13" rx="13" ry="5" stroke="#e8c22a" stroke-width="1.5" transform="rotate(-40 13 13)"/>`)}</gl-taskicon>
    <gl-taskicon w="46">${svg(22, 20, '<path d="M1 4V1h7l2 3z" fill="#e8c25e"/><rect y="4" width="22" height="15" fill="#f4d26c"/><rect x="6" y="10" width="10" height="9" fill="#3aa0de"/><rect x="9" y="13" width="4" height="6" fill="#bfe2f7"/>')}</gl-taskicon>
    <gl-taskicon w="42" run="1">${svg(26, 28, `<ellipse cx="13" cy="15" rx="10.5" ry="12" fill="#fff" stroke="#6fc34c" stroke-width="2"/><g transform="translate(4.5 7.5) scale(.7)">${eLogo('#58b82e', 3.5)}</g><path d="M16 3c2-2 4-2 6-2-1 2-3 3-6 2z" fill="#4aa82a"/>`)}</gl-taskicon>
    <gl-taskicon w="46" run="1">${svg(26, 28, '<path d="M22 3C12 0 3 7 3 15c0 8 7 12 13 10 6-2 7-8 3-10-3-1-6 0-6 3 2-1 4 0 3 2-2 2-7 0-7-6 0-6 7-10 13-11z" fill="#1c8de8" stroke="#1c8de8"/>')}</gl-taskicon>
    <gl-taskicon w="46" run="1">${svg(26, 26, '<rect x=".5" y=".5" width="25" height="25" rx="2" fill="#ee8f1f"/><rect x="5" y="5" width="16" height="17" fill="#fcefc6"/><path d="M7 9h12M7 12h12M7 15h12M7 18h8" stroke="#b59a55"/><path d="M12 17L22 3" stroke="#c8461c" stroke-width="2"/>')}</gl-taskicon>
    <gl-taskicon w="42" run="active">${svg(26, 28, '<rect width="26" height="28" rx="4" fill="#0f93f5"/><path d="M13 5v18M4 11c0 6 4 7 9 7s9-1 9-7M9 8h8" stroke="#fff" stroke-width="2"/>')}</gl-taskicon>
    <span style="margin-left:14px;width:24px;white-space:nowrap;flex:none;color:#c8cdd2">链接</span>
    <div class="col" style="width:52px;margin-left:20px"><span>37%</span><span>CPU使用</span></div>
    <span style="margin-left:16px">${svg(14, 8, '<path d="M1 7l6-6 6 6" stroke="#eee" stroke-width="1.2"/>')}</span>
    <div class="tray" style="margin-left:33px">
      ${svg(16, 14, '<path d="M0 3v7M3 1v11" stroke="#fff"/><rect x="4.5" y="3.5" width="10" height="7" stroke="#fff" fill="#06111a"/><rect x="6" y="5" width="7" height="4" fill="#fff"/>')}
      <span style="margin-left:9px">${svg(16, 15, '<path d="M1 14a13 13 0 0 1 13-13M4 14a10 10 0 0 1 10-10M7 14a7 7 0 0 1 7-7" stroke="#ddd" stroke-dasharray="2 1"/><circle cx="13" cy="13" r="1.5" fill="#fff"/>')}</span>
      <span style="margin-left:6px">${svg(16, 16, '<path d="M1 5.5h3l4-4v13l-4-4H1z" stroke="#fff"/><path d="M10 5c1.5 2 1.5 4 0 6M12 3c3 3 3 7 0 10" stroke="#fff"/>')}</span>
      <span style="margin-left:9px">${svg(24, 15, '<rect x=".5" y=".5" width="23" height="14" stroke="#fff"/><path d="M3 4h18M3 7h18" stroke="#fff" stroke-dasharray="1.5 1"/><path d="M6 11h12" stroke="#fff"/>')}</span>
      <span style="margin-left:9px;font-size:13px;color:#fff">英</span>
      <span style="margin-left:13px">${svg(16, 18, '<rect x="1" y="1" width="14" height="16" rx="3" fill="#e8451c" transform="rotate(8 8 9)"/><text x="8" y="14" font-size="14" font-weight="bold" fill="#fff" text-anchor="middle">S</text>')}</span>
    </div>
    <div class="col" style="margin-left:17px;width:60px;color:#e6e6e6;font-size:12.5px"><span>13:24</span><span>2018/8/7</span></div>
    <span style="margin-left:18px">${svg(16, 16, '<path d="M.5 .5h15v12h-5L8 15l-2.5-2.5h-5z" stroke="#fff"/>')}</span>` }
}

class Badge extends Shadow {
  markup() { return `
    <style>
      :host { position: absolute; left: 778px; top: -28px; width: 46px; height: 46px; border-radius: 50%; background: linear-gradient(#2fb04a, #4cd068); box-shadow: 0 0 0 1px #b5b5b5, 0 1px 2px #888; color: #fff; font: bold 13px "Liberation Sans", sans-serif; display: flex; align-items: flex-end; justify-content: center; padding-bottom: 3px; box-sizing: border-box; }
    </style>
    <slot></slot>` }
}

class Ime extends Shadow {
  markup() { return `
    <style>
      :host { position: absolute; left: 709px; top: 22px; display: flex; align-items: center; height: 28px; }
      svg { display: block; flex: none; }
      .s { width: 24px; height: 24px; background: #ea4f1c; color: #fff; border-radius: 5px; transform: rotate(-12deg); font: bold 22px/24px "Liberation Sans"; text-align: center; flex: none; margin-right: -3px; position: relative; }
      .bar { display: flex; align-items: center; width: 183px; height: 21px; margin-top: 3px; background: #fff; border: 1px solid #a9c4e4; box-sizing: border-box; padding-left: 4px; }
      .y { font: bold 15px/19px "Noto Sans CJK SC"; color: #1d78d6; margin-right: 11px; }
    </style>
    <div class="s">S</div>
    <div class="bar">
      <span class="y">英</span>
      ${svg(10, 10, '<circle cx="2" cy="2" r="1.5" fill="#1d78d6"/><path d="M8 3c.5 2 0 4-1.5 5" stroke="#1d78d6" stroke-width="1.5"/>')}
      <span style="margin-left:11px">${svg(16, 16, '<circle cx="8" cy="8" r="7" stroke="#1d78d6" stroke-width="1.5"/><circle cx="5.5" cy="6.5" r="1" fill="#1d78d6"/><circle cx="10.5" cy="6.5" r="1" fill="#1d78d6"/><path d="M4.5 10c1.5 2 5.5 2 7 0" stroke="#1d78d6"/>')}</span>
      <span style="margin-left:8px">${svg(12, 16, '<rect x="3" y="0" width="6" height="10" rx="3" fill="#1d78d6"/><path d="M1 7c0 5 10 5 10 0M6 11.5V15M3 15.5h6" stroke="#1d78d6" stroke-width="1.3"/>')}</span>
      <span style="margin-left:7px">${svg(16, 12, '<rect width="16" height="12" rx="1.5" fill="#1d78d6"/><path d="M2 3h12M2 5.5h12" stroke="#fff" stroke-dasharray="1.5 1"/><path d="M4 9h8" stroke="#fff"/>')}</span>
      <span style="margin-left:8px">${svg(16, 16, '<circle cx="6" cy="4" r="3.5" fill="#c6cdd6"/><path d="M1 12c0-6 10-6 10 0z" fill="#c6cdd6"/><rect x="6" y="9" width="10" height="6" fill="#dfe3e8"/>')}</span>
      <span style="margin-left:4px">${svg(14, 14, '<path d="M4 1L0 3.5l1.5 3L3 6v8h8V6l1.5.5L14 3.5 10 1C9 3 5 3 4 1z" fill="#1d78d6"/>')}</span>
      <span style="margin-left:7px">${svg(14, 14, '<path d="M13 3a3.5 3.5 0 0 1-4.5 4.5L3 13c-1 1-3-1-2-2l5.5-5.5A3.5 3.5 0 0 1 11 1L9 3l2 2z" fill="#1d78d6"/>')}</span>
    </div>` }
}

customElements.define('gl-tool', Tool)
customElements.define('gl-taskicon', TaskIcon)
customElements.define('gl-drawing', Drawing)
customElements.define('gl-app', App)
customElements.define('gl-titlebar', TitleBar)
customElements.define('gl-menubar', MenuBar)
customElements.define('gl-toolbar', ToolBar)
customElements.define('gl-nav', Nav)
customElements.define('gl-comptree', CompTree)
customElements.define('gl-dialog', Dialog)
customElements.define('gl-strip', Strip)
customElements.define('gl-status', Status)
customElements.define('gl-taskbar', Taskbar)
customElements.define('gl-badge', Badge)
customElements.define('gl-ime', Ime)
</script>
</body>
</html>
